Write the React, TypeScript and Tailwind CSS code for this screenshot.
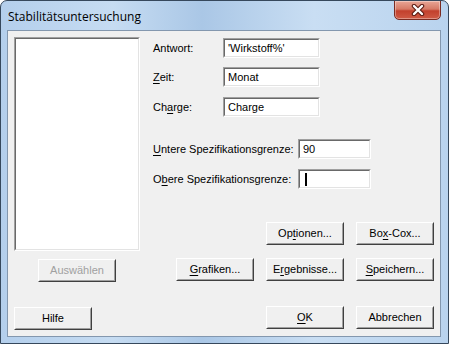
import React from "react";

const font = { fontFamily: '"Liberation Sans", Arial, sans-serif' };

function Btn({ children, disabled, w = "w-[78px]" }: { children: React.ReactNode; disabled?: boolean; w?: string }) {
  return (
    <div className={`${w} h-[23px] border border-t-white border-l-white border-b-[#404040] border-r-[#404040] bg-[#f0f0f0]`}>
      <div className={`h-full w-full border border-t-[#f0f0f0] border-l-[#f0f0f0] border-b-[#a0a0a0] border-r-[#a0a0a0] flex items-center justify-center text-[11px] ${disabled ? "text-[#a0a0a0]" : "text-black"}`}>
        {children}
      </div>
    </div>
  );
}

function Sunken({ className, children }: { className: string; children?: React.ReactNode }) {
  return (
    <div className={`${className} border border-t-[#a0a0a0] border-l-[#a0a0a0] border-b-white border-r-white`}>
      <div className="h-full w-full border border-t-[#696969] border-l-[#696969] border-b-[#e3e3e3] border-r-[#e3e3e3] bg-white flex items-center pl-[3px] text-[11px] text-black">
        {children}
      </div>
    </div>
  );
}

function Field({ label, value, boxW, labelW, mt }: { label: React.ReactNode; value: React.ReactNode; boxW: string; labelW: string; mt: string }) {
  return (
    <div className={`flex items-center ${mt}`}>
      <div className={`${labelW} text-[11px] text-black`}>{label}</div>
      <Sunken className={`${boxW} h-[20px]`}>{value}</Sunken>
    </div>
  );
}

const U = ({ children }: { children: React.ReactNode }) => <span className="underline underline-offset-[2px]">{children}</span>;

export default function App() {
  return (
    <div style={font} className="w-[449px] h-[344px] relative rounded-t-[7px] border border-[#36485c] bg-[linear-gradient(90deg,#b4cfec_0%,#c6dcf2_25%,#aac7e6_45%,#c9def3_70%,#b9d3ee_100%)] flex flex-col overflow-hidden">
      {/* title bar */}
      <div className="h-[29px] flex items-start shrink-0">
        <div className="pl-[7px] pt-[7px] text-[12px] text-black" style={{ fontFamily: '"Open Sans", "Noto Sans", sans-serif' }}>
          Stabilitätsuntersuchung
        </div>
        <div className="ml-auto mr-[7px] -mt-px w-[47px] h-[20px] rounded-b-[5px] border border-[#7a2b22] bg-[linear-gradient(180deg,#e9a696_0%,#d67a66_45%,#c2402d_55%,#cf5a45_100%)] flex items-center justify-center shadow-[inset_0_0_0_1px_rgba(255,255,255,0.35)]">
          <svg width="14" height="12" viewBox="0 0 14 12">
            <path d="M3 2 L11 10 M11 2 L3 10" stroke="#5a1a12" strokeWidth="4.5" strokeLinecap="round" />
            <path d="M3 2 L11 10 M11 2 L3 10" stroke="#ffffff" strokeWidth="2.4" strokeLinecap="round" />
          </svg>
        </div>
      </div>
      {/* client area */}
      <div className="ml-[6px] mr-[7px] h-[307px] border border-[#8397ae] bg-[#f0f0f0] flex">
        {/* left column */}
        <div className="w-[138px] pl-[6px] pt-[6px] flex flex-col shrink-0">
          <Sunken className="w-[126px] h-[214px]" />
          <div className="mt-[8px] ml-[24px]">
            <Btn disabled>Auswählen</Btn>
          </div>
          <div className="mt-[25px]">
            <Btn>Hilfe</Btn>
          </div>
        </div>
        {/* right column */}
        <div className="w-[288px] flex flex-col pl-[7px]">
          <Field mt="mt-[7px]" labelW="w-[70px]" boxW="w-[97px]" label="Antwort:" value="'Wirkstoff%'" />
          <Field mt="mt-[9px]" labelW="w-[70px]" boxW="w-[97px]" label={<><U>Z</U>eit:</>} value="Monat" />
          <Field mt="mt-[10px]" labelW="w-[70px]" boxW="w-[97px]" label={<>Ch<U>a</U>rge:</>} value="Charge" />
          <Field mt="mt-[22px]" labelW="w-[145px]" boxW="w-[73px]" label={<><U>U</U>ntere Spezifikationsgrenze:</>} value="90" />
          <Field mt="mt-[10px]" labelW="w-[145px]" boxW="w-[73px]" label={<>O<U>b</U>ere Spezifikationsgrenze:</>} value={<span className="ml-[2px] inline-block w-[2px] h-[13px] bg-black" />} />
          <div className="mt-[33px] flex justify-end gap-[12px]">
            <Btn>Op<U>t</U>ionen...</Btn>
            <Btn>Bo<U>x</U>-Cox...</Btn>
          </div>
          <div className="mt-[13px] flex justify-end gap-[12px]">
            <Btn><U>G</U>rafiken...</Btn>
            <Btn>E<U>r</U>gebnisse...</Btn>
            <Btn><U>S</U>peichern...</Btn>
          </div>
          <div className="mt-[25px] flex justify-end gap-[12px]">
            <Btn><U>O</U>K</Btn>
            <Btn>Abbrechen</Btn>
          </div>
        </div>
      </div>
    </div>
  );
}
